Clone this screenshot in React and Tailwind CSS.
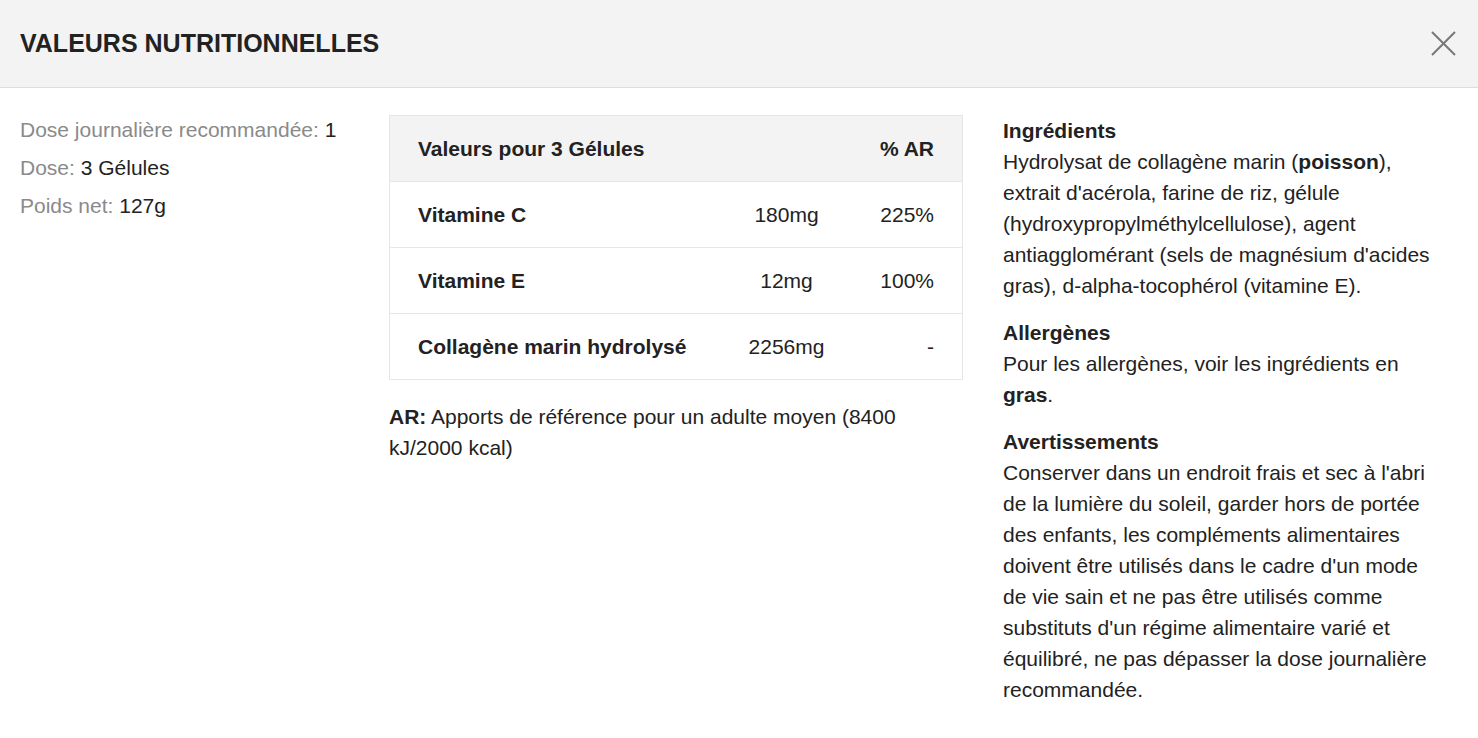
import React from 'react';

const rows = [
  { name: 'Vitamine C', qty: '180mg', ar: '225%' },
  { name: 'Vitamine E', qty: '12mg', ar: '100%' },
  { name: 'Collagène marin hydrolysé', qty: '2256mg', ar: '-' },
];

const App = () => {
  return (
    <div className="min-h-screen bg-white text-[#222] text-[21px]" style={{ fontFamily: '"Liberation Sans", Arial, sans-serif' }}>
      {/* Header */}
      <div className="h-[88px] flex items-center justify-between pl-5 pr-[20px] bg-[#f3f3f3] border-b border-[#dddddd]">
        <h1 className="text-[25px] font-bold text-[#222]">VALEURS NUTRITIONNELLES</h1>
        <button className="w-[30px] h-[30px] flex items-center justify-center text-[#777]" aria-label="Fermer">
          <svg width="25" height="25" viewBox="0 0 25 25" fill="none" stroke="currentColor" strokeWidth="2">
            <path d="M1 1L24 24M24 1L1 24" />
          </svg>
        </button>
      </div>

      <div className="flex pl-5 pt-[27px]">
        {/* Dose info */}
        <div className="w-[369px] shrink-0 -mt-[4px] leading-[38px]">
          <p><span className="text-[#8a8a8a]">Dose journalière recommandée:</span> 1</p>
          <p><span className="text-[#8a8a8a]">Dose:</span> 3 Gélules</p>
          <p><span className="text-[#8a8a8a]">Poids net:</span> 127g</p>
        </div>

        {/* Table */}
        <div className="w-[574px] shrink-0">
          <table className="w-full border-collapse border border-[#e6e6e6] table-fixed">
            <thead>
              <tr className="bg-[#f3f3f3] h-[66px]">
                <th className="text-left font-bold pl-[28px] w-[327px]">Valeurs pour 3 Gélules</th>
                <th className="w-[140px]"></th>
                <th className="text-right font-bold pr-[28px]">% AR</th>
              </tr>
            </thead>
            <tbody>
              {rows.map((r) => (
                <tr key={r.name} className="h-[66px] border-t border-[#e6e6e6]">
                  <td className="font-bold pl-[28px] whitespace-nowrap">{r.name}</td>
                  <td className="text-center">{r.qty}</td>
                  <td className="text-right pr-[28px]">{r.ar}</td>
                </tr>
              ))}
            </tbody>
          </table>
          <p className="mt-[21px] leading-[31px] pr-[40px]">
            <span className="font-bold">AR:</span> Apports de référence pour un adulte moyen (8400 kJ/2000 kcal)
          </p>
        </div>

        {/* Ingredients */}
        <div className="ml-[40px] w-[438px] leading-[31px]">
          <h3 className="font-bold">Ingrédients</h3>
          <p>
            Hydrolysat de collagène marin (<span className="font-bold">poisson</span>), extrait d'acérola, farine de riz, gélule (hydroxypropylméthylcellulose), agent antiagglomérant (sels de magnésium d'acides gras), d-alpha-tocophérol (vitamine E).
          </p>
          <h3 className="font-bold mt-[16px]">Allergènes</h3>
          <p>
            Pour les allergènes, voir les ingrédients en <span className="font-bold">gras</span>.
          </p>
          <h3 className="font-bold mt-[16px]">Avertissements</h3>
          <p>
            Conserver dans un endroit frais et sec à l'abri de la lumière du soleil, garder hors de portée des enfants, les compléments alimentaires doivent être utilisés dans le cadre d'un mode de vie sain et ne pas être utilisés comme substituts d'un régime alimentaire varié et équilibré, ne pas dépasser la dose journalière recommandée.
          </p>
        </div>
      </div>
    </div>
  );
};

export default App;
